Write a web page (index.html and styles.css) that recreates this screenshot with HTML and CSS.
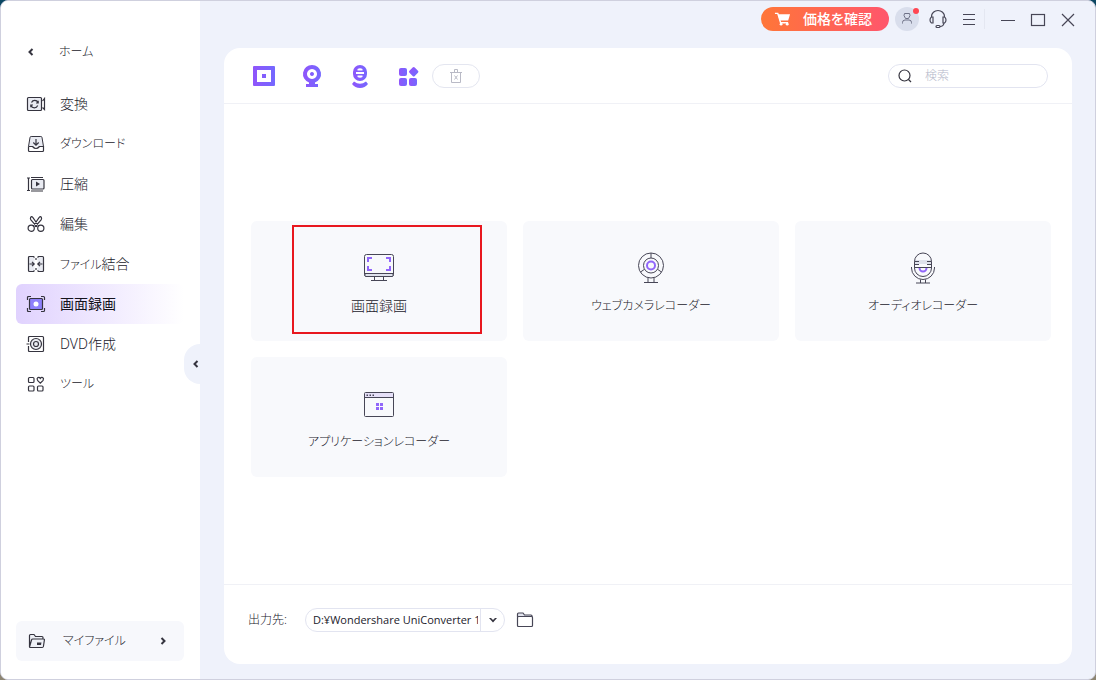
FILE: index.html
```html
<!DOCTYPE html>
<html lang="ja">
<head>
<meta charset="utf-8">
<meta name="viewport" content="width=device-width, initial-scale=1">
<title>画面録画</title>
<link rel="stylesheet" href="styles.css">
</head>
<body>
<svg width="0" height="0" class="defs" aria-hidden="true">
  <defs>
    <linearGradient id="violet" x1="0" y1="0" x2="1" y2="0"><stop offset="0" stop-color="#9055fb"/><stop offset="1" stop-color="#7468ff"/></linearGradient>
  </defs>
</svg>
<div class="window">
  <aside class="sidebar">
    <a class="home" href="#">
      <svg class="chevron" viewBox="0 0 8 8"><path d="M5.500 1 2.500 4l3 3"/></svg>
      <span class="kana">ホーム</span>
    </a>
    <nav class="nav">
      <a class="nav-item" href="#">
        <svg class="icon" viewBox="0 0 20 20"><rect x="1.500" y="3.500" width="14" height="13" rx="1" fill="#e9ebf2"/><path d="M16.500 7 18.500 4.500v11L16.500 13.500M12 8.500A3.600 3.600 0 0 0 5.500 8.500M5 11.500A3.600 3.600 0 0 0 11.700 11.500M12.200 6.800v2.200H10M4.800 13.200V11H7"/></svg>
        <span>変換</span>
      </a>
      <a class="nav-item" href="#">
        <svg class="icon" viewBox="0 0 20 20"><path d="M2.500 12.500 4 3.500q.1-1 1.200-1h9.600q1.100 0 1.200 1l1.500 9" fill="#e9ebf2" stroke-width="1"/><path d="M2.500 12.500v4q0 1 1 1h13q1 0 1-1v-4h-4q-3.500 4-7 0h-4" fill="#fff"/><path d="M10 5v6M7.300 8.500 10 11.200l2.700-2.700"/></svg>
        <span class="kana">ダウンロード</span>
      </a>
      <a class="nav-item" href="#">
        <svg class="icon" viewBox="0 0 20 20"><rect x="5.500" y="5.500" width="12.500" height="9.500" rx="1" fill="#e9ebf2"/><path d="M5 3.500h12M5 17h12M2.500 3.500v13.500M1 4h3M1 16.500h3"/><path class="solid" d="M10 7.500v5l4-2.500z"/></svg>
        <span>圧縮</span>
      </a>
      <a class="nav-item" href="#">
        <svg class="icon" viewBox="0 0 20 20"><circle cx="5.200" cy="14.200" r="3.100"/><circle cx="14.800" cy="14.200" r="3.100"/><path d="M7.300 12 13.200 3.400q1.300-1.500 2.200.2.500 1.200-.3 2.300L9 12.800M12.700 12 6.800 3.400q-1.300-1.500-2.200.2-.5 1.200.3 2.300L11 12.800"/></svg>
        <span>編集</span>
      </a>
      <a class="nav-item" href="#">
        <svg class="icon" viewBox="0 0 20 20"><path d="M8.500 3.500 7.500 2.500h-4q-1 0-1 1v13q0 1 1 1h4l1-1M11.500 3.500l1-1h4q1 0 1 1v13q0 1-1 1h-4l-1-1" fill="#e9ebf2"/><path d="M10 4v2M10 14v2M3.500 10H8M6 7.800 8.200 10 6 12.200M16.500 10H12M14 7.800 11.800 10l2.200 2.200"/></svg>
        <span><span class="kana">ファイル</span>結合</span>
      </a>
      <a class="nav-item active" href="#" aria-current="page">
        <svg class="icon" viewBox="0 0 20 20"><path d="M1.500 6V3.500q0-1 1-1H5M15 2.500h2.500q1 0 1 1V6M18.500 14v2.500q0 1-1 1H15M5 17.500H2.500q-1 0-1-1V14"/><rect x="3.500" y="4.500" width="13" height="11" rx="1" fill="#8e80fb"/><circle cx="10" cy="10" r="2.500" fill="#fff" stroke="none"/></svg>
        <span>画面録画</span>
      </a>
      <a class="nav-item" href="#">
        <svg class="icon" viewBox="0 0 20 20"><path d="M2.500 8V3.500q0-1 1-1h13q1 0 1 1v13q0 1-1 1h-13q-1 0-1-1V12M.5 10h3"/><circle cx="10" cy="10" r="5.500" fill="#e9ebf2"/><circle cx="10" cy="10" r="2.500"/></svg>
        <span>DVD作成</span>
      </a>
      <a class="nav-item" href="#">
        <svg class="icon" viewBox="0 0 20 20"><rect x="2.500" y="3.500" width="5.500" height="5" rx="1"/><rect x="2.500" y="12" width="5.500" height="5" rx="1"/><rect x="11.500" y="12" width="5.500" height="5" rx="1"/><path d="M14.300 9.200 11.500 6.300q-1-1.800.4-2.700 1.500-.6 2.400.8.900-1.400 2.400-.8 1.400.9.400 2.700z"/></svg>
        <span class="kana">ツール</span>
      </a>
    </nav>
    <a class="my-files" href="#">
      <svg class="icon" viewBox="0 0 20 20"><path d="M2.500 16V4.500q0-1 1-1H7l1.500 2h6.500q1 0 1 1V8M2.500 16 4.500 9q.3-1 1.300-1H16.500q1 0 .9 1l-1 6.500q-.2 1-1.200 1H3.500q-1 0-1-1" fill="#eef0f6"/><path class="solid" d="M10 11.500h4.500l-.5 2.500h-4z"/></svg>
      <span class="kana">マイファイル</span>
      <svg class="chevron" viewBox="0 0 8 8"><path d="M2.500 1l3 3-3 3"/></svg>
    </a>
    <button class="collapse" type="button" aria-label="サイドバーを閉じる"><svg class="chevron" viewBox="0 0 8 8"><path d="M5.500 1 2.500 4l3 3"/></svg></button>
  </aside>

  <div class="content">
    <header class="titlebar">
      <button class="buy" type="button">
        <svg viewBox="0 0 18 16"><path d="M1 2h3l3 10h8" fill="none" stroke="#fff" stroke-width="1.500"/><path d="M4 3h13l-2 6.500H6z" fill="#fff"/><circle cx="7.500" cy="13.500" r="1.500" fill="#fff"/><circle cx="14" cy="13.500" r="1.500" fill="#fff"/></svg>
        <span>価格を確認</span>
      </button>
      <button class="avatar" type="button" aria-label="アカウント">
        <svg viewBox="0 0 14 14"><path d="M4.500 1.500h5l.5 2-1.500 3h-3L4 3.500zM2.500 11.500v-1q0-2.500 2.500-2.500h4q2.500 0 2.500 2.500v1"/></svg>
        <span class="dot"></span>
      </button>
      <button class="tool" type="button" aria-label="サポート"><svg viewBox="0 0 20 20"><path d="M3.500 8V7.500a6.500 6 0 0 1 13 0V8M5 8v6H3.500Q2 13 2 11t1.500-3zM15 8v6h1.500q1.500-1 1.500-3t-1.500-3zM16 14q-.5 3.500-4 3.500"/><rect x="8" y="16.500" width="4" height="2" rx="1"/></svg></button>
      <button class="tool menu" type="button" aria-label="メニュー"><svg viewBox="0 0 20 20"><path d="M4 5.500h12M4 10.500h12M4 15.500h12"/></svg></button>
      <div class="window-buttons">
        <button class="tool" type="button" aria-label="最小化"><svg viewBox="0 0 20 20"><path d="M3 11.500h14"/></svg></button>
        <button class="tool" type="button" aria-label="最大化"><svg viewBox="0 0 20 20"><rect x="3.500" y="5.500" width="13" height="11"/></svg></button>
        <button class="tool" type="button" aria-label="閉じる"><svg viewBox="0 0 20 20"><path d="M4 5l12 12M16 5 4 17"/></svg></button>
      </div>
    </header>

    <main class="panel">
      <div class="toolbar">
        <div class="modes">
          <button type="button" aria-label="画面録画"><svg viewBox="0 0 24 24"><path fill-rule="evenodd" d="M2 2h20q1 0 1 1v18q0 1-1 1H2q-1 0-1-1V3q0-1 1-1zM5 6v12h14V6zM10 10h4v4h-4z"/></svg></button>
          <button type="button" aria-label="ウェブカメラレコーダー"><svg viewBox="0 0 24 24"><path fill-rule="evenodd" d="M12 1a9 9 0 0 1 3 17.500V20h3v3H6v-3h3v-1.500A9 9 0 0 1 12 1zM12 5a5 5 0 1 0 .01 0zM12 8a2 2 0 1 1-.01 0z"/></svg></button>
          <button type="button" aria-label="オーディオレコーダー"><svg viewBox="0 0 24 24"><path fill-rule="evenodd" d="M12 1a7 7 0 0 1 7 7v2a7 7 0 0 1-14 0V8a7 7 0 0 1 7-7zM9.500 5Q12 3.500 14.500 5v1.500h-5zM8 8v2h8V8zM9.500 11.500V13q2.500 1.500 5 0v-1.500zM4 20l2-2.500q6 4.500 12 0l2 2.500q-3 4-8 4t-8-4z"/></svg></button>
          <button type="button" aria-label="アプリケーションレコーダー"><svg viewBox="0 0 24 24"><rect x="3" y="4" width="8" height="8" rx="2"/><rect x="3" y="14" width="8" height="8" rx="2"/><rect x="13" y="14" width="8" height="8" rx="2"/><rect x="14" y="4" width="7.500" height="7.500" rx="1.500" transform="rotate(45 17.700 7.700)"/></svg></button>
        </div>
        <button class="delete" type="button" aria-label="削除" disabled><svg viewBox="0 0 16 16"><path d="M2 4.500h12M3.500 4.500v10h9v-10M6.500 4V1.500h3V4M6.500 7.500l3 4M9.500 7.500l-3 4"/></svg></button>
        <label class="search">
          <svg viewBox="0 0 16 16"><circle cx="7.500" cy="7.500" r="5.500"/><path d="M11.500 11.500l2.500 2.500"/></svg>
          <input type="search" placeholder="検索" aria-label="検索">
        </label>
      </div>

      <div class="cards">
        <button class="card" type="button">
          <svg viewBox="0 0 32 32"><rect x="1.500" y="2.500" width="29" height="22" rx="2"/><path d="M2 21.500h28v2q0 1-1 1H3q-1 0-1-1z" fill="#dfe2ec"/><path d="M11.500 25v3.500M20.500 25v3.500M8 28.500h16"/><path class="accent" d="M5 10V6h4M23 6h4v4M27 14v4h-4M9 18H5v-4"/></svg>
          <span>画面録画</span>
          <span class="highlight"></span>
        </button>
        <button class="card" type="button">
          <svg viewBox="0 0 32 32"><circle cx="16" cy="13.500" r="12.500"/><circle cx="16" cy="13.500" r="7.500"/><path d="M16 1v5M9.500 17.300 5.500 20M22.500 17.300l4 2.700"/><path d="M13 26v4M19 26v4M9 30.500h14"/><circle class="accent" cx="16" cy="13.500" r="4"/></svg>
          <span class="kana">ウェブカメラレコーダー</span>
        </button>
        <button class="card" type="button">
          <svg viewBox="0 0 32 32"><path d="M7.500 8h17v4h-17z" fill="#dfe2ec" stroke="none"/><path class="accent" d="M12.500 16a3.500 3.500 0 0 0 7 0"/><path d="M7.500 16V9.500a8.500 8.500 0 0 1 17 0V16a8.500 8.500 0 0 1-17 0zM7.500 9.500H12M20 9.500h4.500M7.500 12.500H12M20 12.500h4.500M7.500 15.500h17M4.500 15v1a11.500 11.500 0 0 0 23 0v-1M13.500 27.500v3.500M18.500 27.500v3.500M9 31h14"/></svg>
          <span class="kana">オーディオレコーダー</span>
        </button>
        <button class="card" type="button">
          <svg viewBox="0 0 32 32"><rect x="1.500" y="4.500" width="29" height="24" rx="1"/><path d="M2 5h28v4.500H2z" fill="#e6e0f8" stroke="none"/><path d="M1.500 9.500h29"/><path d="M3.500 6.500h1.500v1.500H3.500zM6.500 6.500H8v1.500H6.500zM9.500 6.500H11v1.500H9.500z" stroke="none" fill="#474656"/><path d="M13 15h3v3h-3zM17 15h3v3h-3zM13 19h3v3h-3zM17 19h3v3h-3z" fill="#9166fa" stroke="none"/></svg>
          <span class="kana">アプリケーションレコーダー</span>
        </button>
      </div>

      <footer class="output">
        <label for="output-path">出力先:</label>
        <div class="path">
          <select id="output-path"><option>D:¥Wondershare UniConverter 14</option></select>
          <svg viewBox="0 0 8 8"><path d="M0 2h2l2 2 2-2h2L4 6.500z"/></svg>
        </div>
        <button class="tool folder" type="button" aria-label="フォルダーを開く"><svg viewBox="0 0 20 20"><path d="M2.500 7V4q0-1 1-1H8l1.500 2H16q1 0 1 1v1" fill="#e2e4ee"/><rect x="2.500" y="6.500" width="15" height="10" rx="1" fill="#fff"/></svg></button>
      </footer>
    </main>
  </div>
</div>
</body>
</html>
```
FILE: styles.css
```css
* {
  box-sizing: border-box;
}

body {
  margin: 0;
  background: linear-gradient(#0b4763, #8d8572);
  color: #22212b;
  font-family: "Noto Sans", "Noto Sans CJK JP", sans-serif;
  font-size: 14px;
  font-weight: 300;
  font-feature-settings: "palt";
  line-height: 20px;
}

button,
input,
select {
  margin: 0;
  padding: 0;
  border: 0;
  background: none;
  color: inherit;
  font: inherit;
  font-feature-settings: inherit;
}

a {
  color: inherit;
  text-decoration: none;
}

svg {
  display: block;
  flex: none;
  fill: none;
  stroke: #35343f;
}

.defs {
  position: absolute;
}

.kana {
  font-size: 12px;
}

.window {
  display: flex;
  min-height: 100vh;
  overflow: hidden;
  border: 1px solid #cfd0de;
  border-radius: 8px;
  background: #eff2fb;
}

.sidebar {
  position: relative;
  display: flex;
  flex: none;
  flex-direction: column;
  width: 199px;
  padding: 41px 16px 18px 15px;
  background: #fff;
}

.home {
  display: flex;
  align-items: center;
  gap: 24px;
  padding-left: 11px;
}

.chevron {
  width: 8px;
  height: 8px;
  stroke-width: 2;
}

.nav {
  display: flex;
  flex-direction: column;
  margin-top: 22px;
}

.nav-item {
  display: flex;
  align-items: center;
  gap: 14px;
  height: 40px;
  padding-left: 10px;
  border-radius: 6px;
}

.nav-item.active {
  background: linear-gradient(90deg, #e0d2fe, #fff);
  color: #14131c;
  font-weight: 400;
}

.icon {
  width: 20px;
  height: 20px;
  stroke-width: 1.2;
}

.solid {
  fill: #35343f;
  stroke: none;
}

.my-files {
  display: flex;
  align-items: center;
  gap: 16px;
  height: 40px;
  margin-top: auto;
  padding: 0 17px 0 11px;
  border-radius: 6px;
  background: #f7f8fc;
}

.my-files .chevron {
  margin-left: auto;
}

.collapse {
  position: absolute;
  top: 343px;
  right: 0;
  width: 16px;
  height: 40px;
  padding-left: 8px;
  border-radius: 20px 0 0 20px;
  background: #eff2fb;
}

.content {
  display: flex;
  flex: 1;
  flex-direction: column;
  min-width: 0;
  padding: 0 23px 15px 24px;
}

.titlebar {
  display: flex;
  align-items: center;
  justify-content: flex-end;
  height: 47px;
  margin-right: -6px;
  padding-bottom: 11px;
}

.buy {
  display: flex;
  align-items: center;
  gap: 12px;
  width: 128px;
  height: 24px;
  padding-left: 13px;
  border-radius: 12px;
  background: linear-gradient(90deg, #ff7638, #ff566c);
  color: #fff;
  font-weight: 500;
}

.buy svg {
  width: 17px;
  height: 16px;
  stroke: none;
}

.avatar {
  position: relative;
  display: grid;
  place-items: center;
  width: 24px;
  height: 24px;
  margin: 0 9px 0 6px;
  border-radius: 50%;
  background: #d9deec;
}

.avatar svg {
  width: 14px;
  height: 14px;
  stroke: #6f7287;
}

.dot {
  position: absolute;
  top: 1px;
  right: 0;
  width: 6px;
  height: 6px;
  border-radius: 50%;
  background: #ff4652;
}

.tool {
  width: 20px;
  height: 20px;
}

.tool svg {
  width: 20px;
  height: 20px;
  stroke: #474656;
  stroke-width: 1.2;
}

.menu {
  margin: 0 5px 0 11px;
}

.window-buttons {
  display: flex;
  gap: 10px;
  padding-left: 13px;
  border-left: 1px solid #e4e7f1;
}

.panel {
  display: flex;
  flex: 1;
  flex-direction: column;
  border-radius: 16px;
  background: #fff;
}

.toolbar {
  display: flex;
  align-items: center;
  height: 56px;
  padding: 0 24px 0 28px;
  border-bottom: 1px solid #f0f1f6;
}

.modes {
  display: flex;
  gap: 24px;
}

.modes svg {
  width: 24px;
  height: 24px;
  fill: url(#violet);
  stroke: none;
}

.delete {
  display: grid;
  place-items: center;
  width: 48px;
  height: 24px;
  margin-left: 12px;
  border: 1px solid #e4e6f0;
  border-radius: 12px;
}

.delete svg {
  width: 16px;
  height: 16px;
  stroke: #b9bac6;
}

.search {
  display: flex;
  align-items: center;
  gap: 12px;
  width: 160px;
  height: 24px;
  margin-left: auto;
  padding: 0 8px;
  border: 1px solid #e2e4f0;
  border-radius: 12px;
}

.search svg {
  width: 16px;
  height: 16px;
  stroke-width: 1.2;
}

.search input {
  flex: 1;
  min-width: 0;
  outline: 0;
  font-size: 12px;
}

.search input::placeholder {
  color: #b4b7ca;
}

.cards {
  display: grid;
  flex: 1;
  grid-template-columns: repeat(3, 1fr);
  align-content: center;
  gap: 16px;
  padding: 10px 21px 0 27px;
}

.card {
  position: relative;
  display: flex;
  flex-direction: column;
  align-items: center;
  justify-content: center;
  gap: 12px;
  height: 120px;
  padding-top: 6px;
  border-radius: 6px;
  background: #f8f9fc;
}

.card svg {
  width: 32px;
  height: 32px;
  stroke: #474656;
}

.card .accent {
  stroke: #9166fa;
  stroke-width: 2;
}

.highlight {
  position: absolute;
  top: 4px;
  left: 41px;
  width: 190px;
  height: 109px;
  border: 2px solid #e8171f;
}

.output {
  display: flex;
  align-items: center;
  height: 80px;
  padding: 0 24px 10px;
  border-top: 1px solid #f0f1f6;
}

.output label {
  width: 57px;
  font-size: 12px;
}

.path {
  position: relative;
  width: 200px;
}

.path select {
  display: block;
  width: 100%;
  height: 24px;
  padding: 0 26px 0 7px;
  border: 1px solid #e2e4f0;
  border-radius: 12px;
  appearance: none;
  background: linear-gradient(#e2e4f0, #e2e4f0) right 23px top / 1px 100% no-repeat;
  font-family: "Open Sans", "Noto Sans CJK JP", sans-serif;
  font-size: 11px;
  font-weight: 400;
}

.path svg {
  position: absolute;
  top: 8px;
  right: 8px;
  width: 8px;
  height: 8px;
  fill: #35343f;
  stroke: none;
  pointer-events: none;
}

.folder {
  margin-left: 10px;
}
```
